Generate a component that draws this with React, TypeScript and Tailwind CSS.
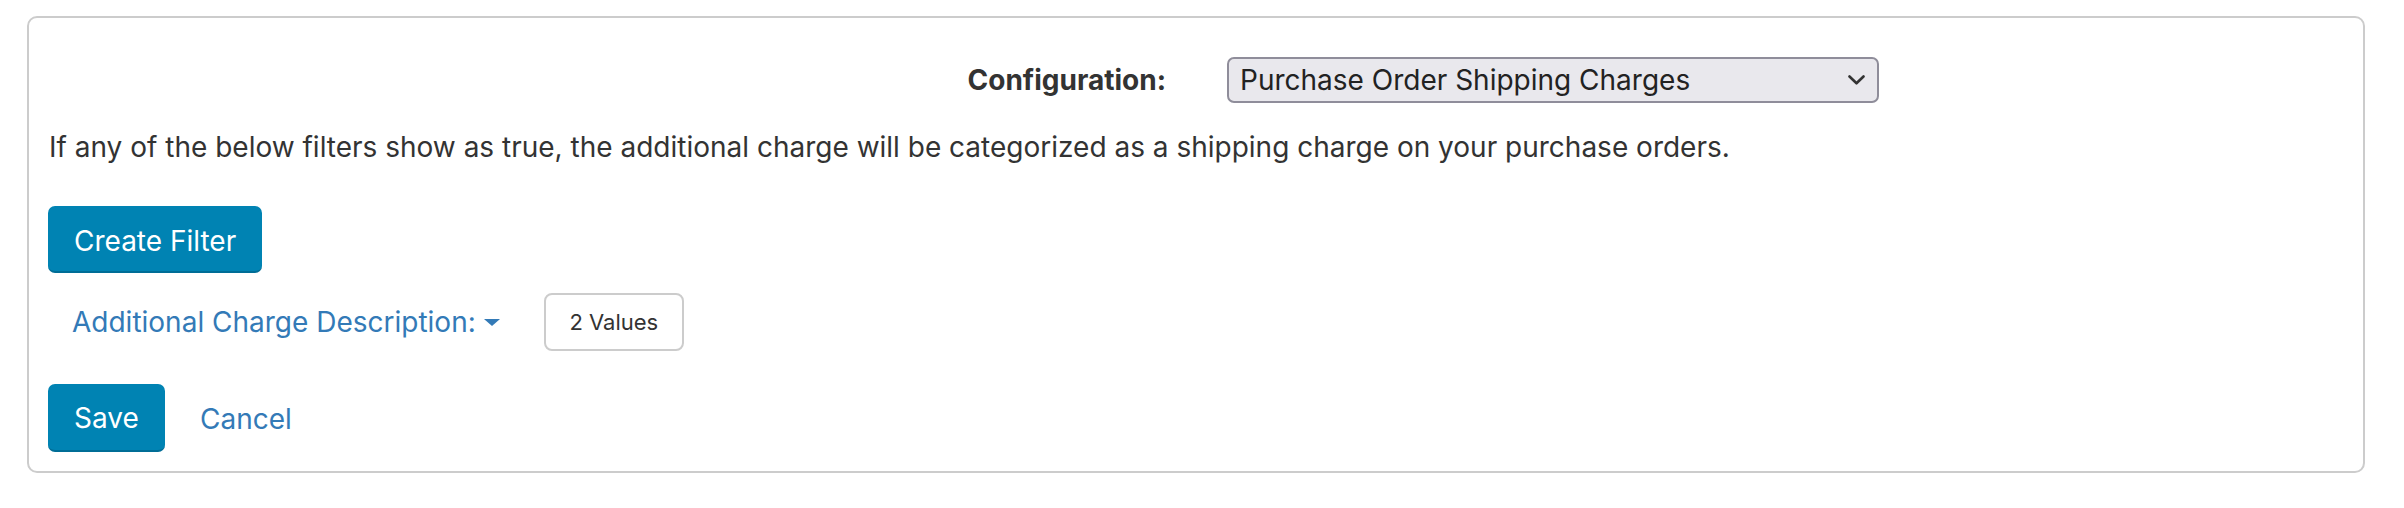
import React from "react";

const App = () => {
  return (
    <div className="w-[2404px] h-[508px] bg-white pt-[16px] pl-[27px] font-['Inter',sans-serif] text-[#333333]">
      <div className="w-[2338px] border-2 border-[#cccccc] rounded-[10px] px-[20px] pb-[19px] flex flex-col items-start">
        {/* configuration picker */}
        <div className="mt-[39px] flex items-center h-[46px]">
          <label className="w-[1117px] text-right font-bold text-[28px] leading-[40px]">
            Configuration:
          </label>
          <div className="ml-[61px] w-[652px] h-[46px] flex items-center justify-between bg-[#e9e8ed] border-2 border-[#8f8d9a] rounded-[7px] pl-[11px] pr-[12px]">
            <span className="text-[28px] leading-[40px] text-[#222222]">
              Purchase Order Shipping Charges
            </span>
            <svg width="17" height="10" viewBox="0 0 17 10" fill="none">
              <path
                d="M1.5 1.5 L8.5 8.3 L15.5 1.5"
                stroke="#333333"
                strokeWidth="2.6"
                strokeLinecap="round"
                strokeLinejoin="round"
              />
            </svg>
          </div>
        </div>

        <p className="mt-[24px] text-[28px] leading-[40px]">
          If any of the below filters show as true, the additional charge will be categorized as a shipping charge on your purchase orders.
        </p>

        <button
          type="button"
          className="mt-[39px] -ml-[1px] h-[67px] px-[26px] pt-[5px] bg-[#0083b3] border-b-2 border-[#006d96] rounded-[7px] text-white text-[28px] leading-[40px]"
        >
          Create Filter
        </button>

        {/* filter row */}
        <div className="mt-[20px] flex items-center h-[58px]">
          <button
            type="button"
            className="ml-[23px] flex items-center gap-[8px] text-[#337ab7] text-[28px] leading-[40px]"
          >
            Additional Charge Description:
            <svg width="16" height="7" viewBox="0 0 16 7">
              <path d="M0 0 H16 L8 7 Z" fill="#337ab7" />
            </svg>
          </button>
          <div className="ml-[44px] w-[140px] h-[58px] flex items-center justify-center border-2 border-[#cccccc] rounded-[8px] text-[22px] text-[#333333]">
            2 Values
          </div>
        </div>

        <div className="mt-[33px] flex items-center -ml-[1px]">
          <button
            type="button"
            className="h-[68px] w-[117px] pt-[2px] bg-[#0083b3] border-b-2 border-[#006d96] rounded-[7px] text-white text-[28px] leading-[40px]"
          >
            Save
          </button>
          <button type="button" className="ml-[35px] pt-[2px] text-[#337ab7] text-[28px] leading-[40px]">
            Cancel
          </button>
        </div>
      </div>
    </div>
  );
};

export default App;
